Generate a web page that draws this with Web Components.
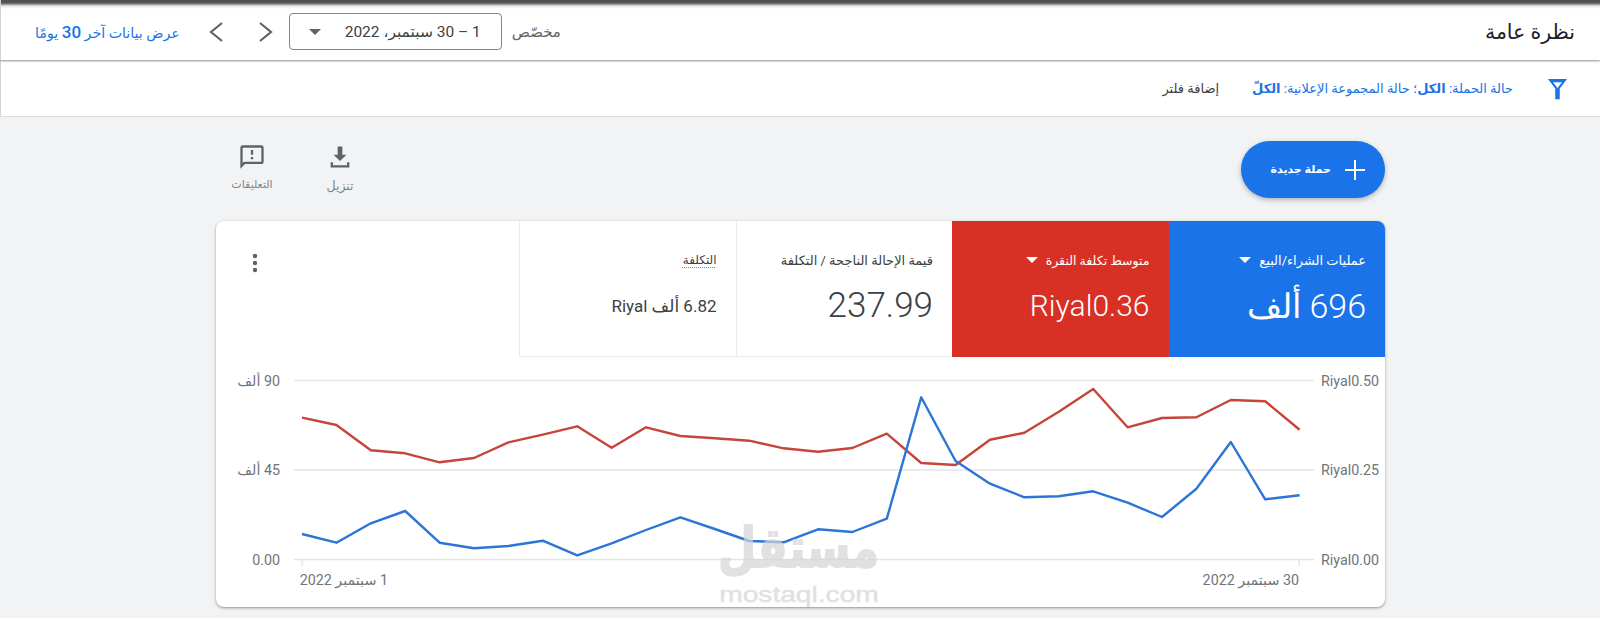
<!DOCTYPE html>
<html lang="ar" dir="rtl">
<head>
<meta charset="utf-8">
<title>نظرة عامة</title>
<style>
  html, body { margin: 0; height: 618px; overflow: hidden; }
  body { background: #f1f3f4; color: #3c4043; font-family: Roboto, "DejaVu Sans", sans-serif; }
</style>
</head>
<body>
<ads-top-bar heading="نظرة عامة" range="1 – 30 سبتمبر، 2022"></ads-top-bar>
<ads-filter-bar></ads-filter-bar>
<ads-toolbar></ads-toolbar>
<ads-card>
  <ads-tile slot="tiles" label="عمليات الشراء/البيع" value="696 ألف" tone="blue" caret></ads-tile>
  <ads-tile slot="tiles" label="متوسط تكلفة النقرة" value="Riyal0.36" tone="red" caret style="--label-size:12.5px;--value-size:30px"></ads-tile>
  <ads-tile slot="tiles" label="قيمة الإحالة الناجحة / التكلفة" value="237.99" style="--value-size:35px"></ads-tile>
  <ads-tile slot="tiles" label="التكلفة" value="6.82 ألف Riyal" small style="--label-size:12px"></ads-tile>
  <ads-chart></ads-chart>
</ads-card>

<script>
class AdsTopBar extends HTMLElement {
  constructor() {
    super();
    const root = this.attachShadow({ mode: "open" });
    root.innerHTML = `
      <style>
        :host { display: flex; align-items: center; height: 57px; padding-top: 3px;
          background: linear-gradient(#4d4f52 0, #55575a 3px, #e8e8e8 6px, #fff 9px); position: relative;
          box-shadow: inset 1px 0 #d4d4d4, 0 1px 2px #8f8f8f; z-index: 2; }
        h1 { margin: 0 25px 0 0; font-size: 20.5px; font-weight: 400; color: #202124; flex: 1; }
        .label { font-size: 15px; color: #5f6368; margin-left: 10px; }
        .range { width: 213px; height: 37px; box-sizing: border-box; border: 1px solid #80868b; border-radius: 4px;
          display: flex; align-items: center; justify-content: space-between; padding: 0 20px 0 19px;
          font-size: 15.500px; color: #3c4043; white-space: nowrap; }
        .caret { width: 0; height: 0; border: 6px solid transparent; border-top: 6px solid #5f6368; border-bottom: 0; }
        .nav { display: flex; gap: 24px; margin: 0 12px 0 25px; }
        svg { display: block; }
        a { font-size: 14.200px; color: #1a73e8; margin-left: 35px; text-decoration: none; white-space: nowrap; }
        a b { font: 500 17px Roboto, sans-serif; }
      </style>
      <h1>${this.getAttribute("heading")}</h1>
      <span class="label">مخصّص</span>
      <div class="range"><span>${this.getAttribute("range")}</span><i class="caret"></i></div>
      <div class="nav">
        <svg width="24" height="24" viewBox="0 0 24 24"><path d="M7 3l11 9-11 9" fill="none" stroke="#5f6368" stroke-width="2.200"/></svg>
        <svg width="24" height="24" viewBox="0 0 24 24"><path d="M17 3 6 12l11 9" fill="none" stroke="#5f6368" stroke-width="2.200"/></svg>
      </div>
      <a href="#">عرض بيانات آخر <b>30</b> يومًا</a>`;
  }
}
customElements.define("ads-top-bar", AdsTopBar);

class AdsFilterBar extends HTMLElement {
  constructor() {
    super();
    const root = this.attachShadow({ mode: "open" });
    root.innerHTML = `
      <style>
        :host { display: flex; align-items: center; height: 56px; background: #fff; border-bottom: 1px solid #dadce0;
          padding-right: 29px; font-size: 13px; box-shadow: inset 1px 0 #d4d4d4; }
        svg { display: block; margin-left: 31px; }
        .filters { color: #1a73e8; }
        .add { color: #3c4043; margin-right: 33px; }
      </style>
      <svg width="27" height="27" viewBox="0 0 24 24"><path d="M3.500 3.500h17l-6.500 8.500v9.500h-4V12z M8 6.500l4 5 4-5z" fill="#1a73e8" fill-rule="evenodd"/></svg>
      <span class="filters">حالة الحملة: <b>الكل</b>؛ حالة المجموعة الإعلانية: <b>الكلّ</b></span>
      <span class="add">إضافة فلتر</span>`;
  }
}
customElements.define("ads-filter-bar", AdsFilterBar);

class AdsToolbar extends HTMLElement {
  constructor() {
    super();
    const root = this.attachShadow({ mode: "open" });
    root.innerHTML = `
      <style>
        :host { display: flex; justify-content: space-between; align-items: flex-start; height: 80px;
          padding: 24px 215px 0 216px; }
        .new { display: flex; align-items: center; gap: 12px; height: 57px; width: 144px; box-sizing: border-box;
          padding-right: 18px; border-radius: 29px; background: #1a73e8; color: #fff; font-size: 11px; font-weight: 700;
          box-shadow: 0 2px 5px rgba(60,64,67,.35); }
        .actions { display: flex; gap: 26px; margin: 2px 0 0 5px; }
        .act { display: flex; flex-direction: column; align-items: center; width: 62px; gap: 7px; color: #80868b; }
        .act.dl { font-size: 12.500px; }
        .act.fb { font-size: 11px; }
        svg { display: block; }
      </style>
      <div class="new">
        <svg width="24" height="24" viewBox="0 0 24 24"><path d="M12 2v20M2 12h20" stroke="#fff" stroke-width="2"/></svg>
        <span>حملة جديدة</span>
      </div>
      <div class="actions">
        <div class="act dl">
          <svg width="28" height="28" viewBox="0 0 24 24"><path d="M10 3h4v7h3.500L12 15.500 6.500 10H10zM4 16.500h2v2.500h12v-2.500h2V21H4z" fill="#5f6368"/></svg>
          <span>تنزيل</span>
        </div>
        <div class="act fb">
          <svg width="28" height="28" viewBox="0 0 24 24"><path d="M20 2H4c-1.100 0-2 .9-2 2v18l4-4h14c1.100 0 2-.9 2-2V4c0-1.100-.9-2-2-2zm0 14H5.170L4 17.170V4h16v12zM11 12h2v2h-2zm0-6h2v4h-2z" fill="#5f6368"/></svg>
          <span>التعليقات</span>
        </div>
      </div>`;
  }
}
customElements.define("ads-toolbar", AdsToolbar);

class AdsCard extends HTMLElement {
  constructor() {
    super();
    const root = this.attachShadow({ mode: "open" });
    root.innerHTML = `
      <style>
        :host { display: block; position: relative; width: 1169px; height: 386px; margin: 0 215px 0 216px;
          background: #fff; border-radius: 8px; overflow: hidden;
          box-shadow: 0 1px 2px rgba(60,64,67,.4), 0 1px 3px 1px rgba(60,64,67,.12); }
        .tiles { display: flex; height: 136px; }
        .more { flex: 1; display: flex; align-items: flex-start; justify-content: flex-end; padding: 31px 28px 0 0; }
        .more svg { display: block; margin-left: 29px; }
        /* mostaql watermark */
        .mark { position: absolute; left: 503px; top: 312px; width: 160px; text-align: center; color: #d4d5d7; opacity: .7;
          pointer-events: none; line-height: 1; }
        .mark b { display: block; font-size: 44px; height: 51px; -webkit-text-stroke: 1.500px #d4d5d7;
          transform: scaleY(1.25); transform-origin: 50% 100%; }
        .mark span { display: block; font: 400 22px/1 "Liberation Sans", sans-serif; -webkit-text-stroke: .5px #d4d5d7;
          direction: ltr; transform: scaleX(1.28); }
      </style>
      <div class="tiles">
        <slot name="tiles"></slot>
        <div class="more"><svg width="20" height="24" viewBox="0 0 20 24"><g fill="#5f6368"><circle cx="10" cy="4" r="2.200"/><circle cx="10" cy="11" r="2.200"/><circle cx="10" cy="18" r="2.200"/></g></svg></div>
      </div>
      <slot></slot>
      <div class="mark"><b>مستقل</b><span>mostaql.com</span></div>`;
  }
}
customElements.define("ads-card", AdsCard);

class AdsTile extends HTMLElement {
  constructor() {
    super();
    const root = this.attachShadow({ mode: "open" });
    const caret = this.hasAttribute("caret") ? `<i class="caret"></i>` : "";
    root.innerHTML = `
      <style>
        :host { display: flex; flex-direction: column; width: 216.500px; box-sizing: border-box; padding: 31px 19px 0 6px;
          background: #fff; color: #3c4043; }
        :host([tone="blue"]) { background: #1a73e8; color: #fff; }
        :host([tone="red"]) { background: #d93025; color: #fff; }
        :host(:not([tone])) { border-left: 1px solid #e8eaed; border-bottom: 1px solid #e8eaed; }
        .label { display: flex; align-items: center; gap: 8px; font-size: var(--label-size, 13px); height: 16px; white-space: nowrap; }
        .caret { width: 0; height: 0; border: 6px solid transparent; border-top: 6px solid currentColor; border-bottom: 0; }
        .value { font-size: var(--value-size, 34px); font-weight: 300; margin-top: 16px; line-height: 44px; white-space: nowrap; }
        :host([small]) .value { font-size: 17px; font-weight: 400; }
        :host([small]) .label span { text-decoration: underline dotted #80868b; text-underline-offset: 3px; }
      </style>
      <div class="label"><span>${this.getAttribute("label")}</span>${caret}</div>
      <div class="value">${this.getAttribute("value")}</div>`;
  }
}
customElements.define("ads-tile", AdsTile);

class AdsChart extends HTMLElement {
  constructor() {
    super();
    const root = this.attachShadow({ mode: "open" });

    // series read off the reference, in zoomed pixels (3x) below y=360 of the page
    const red = [173,195,271,280,307,294,247,224,199,263,202,228,235,242,265,275,264,221,309,315,239,218,155,87,202,174,172,120,124,209];
    const blue = [522,548,490,453,548,565,558,542,586,550,510,472,507,543,547,508,516,476,112,303,371,412,409,394,428,471,386,246,418,406];
    const pts = list => list.map((v, i) => `${(86 + 34.4 * i).toFixed(1)},${(3 + v / 3).toFixed(1)}`).join(" ");

    root.innerHTML = `
      <style>
        :host { display: block; height: 250px; }
        svg { display: block; font-size: 14.300px; fill: #70757a; }
        .grid { stroke: #e3e5e8; stroke-width: 1.500; }
        .line { fill: none; stroke-width: 2.400; stroke-linejoin: round; }
        .rtl { direction: rtl; }
        .ltr { direction: ltr; }
      </style>
      <svg width="1169" height="250" viewBox="0 0 1169 250">
        <g class="grid">
          <path d="M78 23.500H1098M78 113H1098M78 202.500H1098"/>
          <path d="M86 203V209M1083 203V209" stroke="#dadce0" stroke-width="1"/>
        </g>
        <polyline class="line" stroke="#c5453a" points="${pts(red)}"/>
        <polyline class="line" stroke="#2c74d6" points="${pts(blue)}"/>
        <g class="rtl">
          <text x="64" y="28.500" text-anchor="start">90 ألف</text>
          <text x="64" y="118" text-anchor="start">45 ألف</text>
          <text x="64" y="207.500" text-anchor="start">0.00</text>
          <text x="172" y="227.500" text-anchor="start">1 سبتمبر 2022</text>
          <text x="1083" y="227.500" text-anchor="start">30 سبتمبر 2022</text>
        </g>
        <g class="ltr">
          <text x="1105" y="28.500">Riyal0.50</text>
          <text x="1105" y="118">Riyal0.25</text>
          <text x="1105" y="207.500">Riyal0.00</text>
        </g>
      </svg>`;
  }
}
customElements.define("ads-chart", AdsChart);
</script>
</body>
</html>
